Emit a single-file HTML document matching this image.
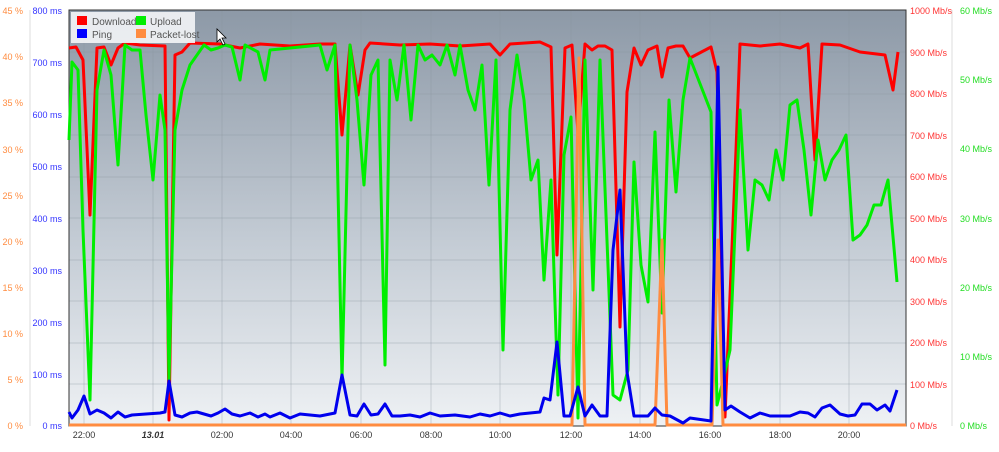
<!DOCTYPE html>
<html><head><meta charset="utf-8"><style>
body{margin:0;background:#fff;width:999px;height:447px;overflow:hidden;font-family:"Liberation Sans",sans-serif}
svg text{font-family:"Liberation Sans",sans-serif;font-size:9px}
</style></head><body>
<svg width="999" height="447" viewBox="0 0 999 447">
<defs><linearGradient id="g" x1="0" y1="0" x2="0" y2="1">
<stop offset="0" stop-color="#8d99a7"/><stop offset="0.55" stop-color="#c3cbd4"/><stop offset="1" stop-color="#eef1f4"/></linearGradient></defs>
<rect x="69" y="10" width="837" height="416" fill="url(#g)"/>
<g stroke="#8a949f" stroke-opacity="0.35" stroke-width="1">
<line x1="69" x2="906" y1="52" y2="52"/><line x1="69" x2="906" y1="94" y2="94"/><line x1="69" x2="906" y1="135" y2="135"/><line x1="69" x2="906" y1="177" y2="177"/><line x1="69" x2="906" y1="218" y2="218"/><line x1="69" x2="906" y1="260" y2="260"/><line x1="69" x2="906" y1="301" y2="301"/><line x1="69" x2="906" y1="343" y2="343"/><line x1="69" x2="906" y1="384" y2="384"/>
<line y1="10" y2="426" x1="84" x2="84"/><line y1="10" y2="426" x1="153" x2="153"/><line y1="10" y2="426" x1="222" x2="222"/><line y1="10" y2="426" x1="291" x2="291"/><line y1="10" y2="426" x1="361" x2="361"/><line y1="10" y2="426" x1="431" x2="431"/><line y1="10" y2="426" x1="500" x2="500"/><line y1="10" y2="426" x1="571" x2="571"/><line y1="10" y2="426" x1="640" x2="640"/><line y1="10" y2="426" x1="710" x2="710"/><line y1="10" y2="426" x1="780" x2="780"/><line y1="10" y2="426" x1="849" x2="849"/>
</g>
<rect x="69" y="10" width="837" height="416" fill="none" stroke="#333" stroke-width="1"/>
<g fill="none" stroke-width="3" stroke-linejoin="round">
<polyline stroke="#ff0000" points="69,48 76,47 83,60 90,215 97,48 104,47 111,65 118,48 125,43 140,45 165,46 169,420 175,55 182,52 190,43 220,44 240,48 260,44 290,46 320,44 335,44 342,135 350,45 358,95 365,50 370,43 400,45 430,44 460,46 490,44 500,55 510,44 540,42 551,47 557,255 565,48 572,45 578,133 585,44 592,50 598,46 605,46 612,50 620,327 627,92 634,48 641,65 648,50 657,46 662,77 668,48 676,46 683,46 690,58 711,47 717,72 725,417 736,150 740,44 760,46 780,44 800,48 808,44 815,160 822,44 840,45 860,52 885,55 893,90 898,52"/>
<polyline stroke="#00ee00" points="69,140 72,62 78,70 83,230 90,400 97,90 104,50 111,75 118,165 125,45 132,50 140,50 146,115 153,180 160,95 165,130 169,380 175,130 182,90 190,65 197,55 204,45 211,50 218,48 225,45 232,47 240,80 245,45 258,52 265,80 270,50 290,48 320,45 327,70 335,45 342,380 350,45 357,100 364,185 371,75 378,60 385,365 390,60 397,100 404,45 411,120 418,45 425,60 432,55 440,65 447,45 455,75 460,45 468,90 475,110 482,65 489,185 496,60 503,350 510,110 517,55 524,100 531,180 538,160 544,280 551,180 558,395 564,155 571,117 578,418 585,60 593,290 600,60 613,395 620,400 628,370 634,162 641,265 648,302 655,132 662,313 669,100 676,192 683,100 690,58 711,112 717,405 722,385 730,350 740,110 748,250 755,180 762,185 769,200 776,150 783,180 790,105 797,100 804,150 811,215 818,140 825,180 832,160 839,150 846,135 853,240 860,235 867,225 874,205 881,205 888,180 897,282"/>
<polyline stroke="#ff8c40" points="69,425 572,425 579,58 585,425 655,425 662,240 667,425 712,425 718,240 723,425 906,425"/>
<polyline stroke="#0000ee" points="69,412 72,418 78,410 84,396 90,414 97,410 104,413 111,418 118,412 125,417 132,415 160,413 165,412 169,381 175,415 182,417 190,413 197,412 204,414 211,416 218,413 225,409 232,414 240,416 250,413 258,417 265,414 270,417 280,413 290,418 300,414 320,416 335,413 342,375 350,415 357,416 364,404 371,415 378,414 385,404 392,416 400,416 410,415 420,417 430,413 440,416 455,415 470,417 480,414 490,416 500,413 510,416 520,414 530,413 540,412 544,398 550,400 557,342 564,416 570,416 578,387 585,416 592,405 600,416 607,416 613,250 620,190 627,372 634,416 648,416 655,408 662,415 670,416 683,423 690,418 711,421 718,67 725,410 731,406 740,412 750,418 760,413 770,416 790,416 800,412 808,413 815,417 822,408 830,405 840,414 848,416 855,415 862,404 870,404 877,410 885,405 890,411 897,390"/>
</g>
<rect x="71" y="12" width="124" height="31" fill="#f4f5f7" fill-opacity="0.9"/>
<rect x="77" y="16" width="10" height="9" fill="#ff0000"/><text x="92" y="25" fill="#555" style="font-size:10px">Download</text>
<rect x="136" y="16" width="10" height="9" fill="#00ee00"/><text x="150" y="25" fill="#555" style="font-size:10px">Upload</text>
<rect x="77" y="29" width="10" height="9" fill="#0000ff"/><text x="92" y="38" fill="#555" style="font-size:10px">Ping</text>
<rect x="136" y="29" width="10" height="9" fill="#ff8c40"/><text x="150" y="38" fill="#555" style="font-size:10px">Packet-lost</text>
<path d="M217,29 L217,42 L220,39 L223,45 L225,44 L222,38 L226,38 Z" fill="#fff" stroke="#000" stroke-width="0.8"/>
<line x1="30" x2="30" y1="10" y2="426" stroke="#ddd"/>
<line x1="952" x2="952" y1="10" y2="426" stroke="#ddd"/>
<g fill="#ff8c40" text-anchor="end">
<text x="23" y="14">45 %</text><text x="23" y="60">40 %</text><text x="23" y="106">35 %</text><text x="23" y="153">30 %</text><text x="23" y="199">25 %</text><text x="23" y="245">20 %</text><text x="23" y="291">15 %</text><text x="23" y="337">10 %</text><text x="23" y="383">5 %</text><text x="23" y="429">0 %</text></g>
<g fill="#3333ff" text-anchor="end">
<text x="62" y="14">800 ms</text><text x="62" y="66">700 ms</text><text x="62" y="118">600 ms</text><text x="62" y="170">500 ms</text><text x="62" y="222">400 ms</text><text x="62" y="274">300 ms</text><text x="62" y="326">200 ms</text><text x="62" y="378">100 ms</text><text x="62" y="429">0 ms</text></g>
<g fill="#ff3333">
<text x="910" y="14">1000 Mb/s</text><text x="910" y="56">900 Mb/s</text><text x="910" y="97">800 Mb/s</text><text x="910" y="139">700 Mb/s</text><text x="910" y="180">600 Mb/s</text><text x="910" y="222">500 Mb/s</text><text x="910" y="263">400 Mb/s</text><text x="910" y="305">300 Mb/s</text><text x="910" y="346">200 Mb/s</text><text x="910" y="388">100 Mb/s</text><text x="910" y="429">0 Mb/s</text></g>
<g fill="#22dd22">
<text x="960" y="14">60 Mb/s</text><text x="960" y="83">50 Mb/s</text><text x="960" y="152">40 Mb/s</text><text x="960" y="222">30 Mb/s</text><text x="960" y="291">20 Mb/s</text><text x="960" y="360">10 Mb/s</text><text x="960" y="429">0 Mb/s</text></g>
<g fill="#333" text-anchor="middle">
<text x="84" y="438">22:00</text><text x="153" y="438" font-weight="bold" font-style="italic">13.01</text><text x="222" y="438">02:00</text><text x="291" y="438">04:00</text><text x="361" y="438">06:00</text><text x="431" y="438">08:00</text><text x="500" y="438">10:00</text><text x="571" y="438">12:00</text><text x="640" y="438">14:00</text><text x="710" y="438">16:00</text><text x="780" y="438">18:00</text><text x="849" y="438">20:00</text></g>
</svg>
</body></html>
